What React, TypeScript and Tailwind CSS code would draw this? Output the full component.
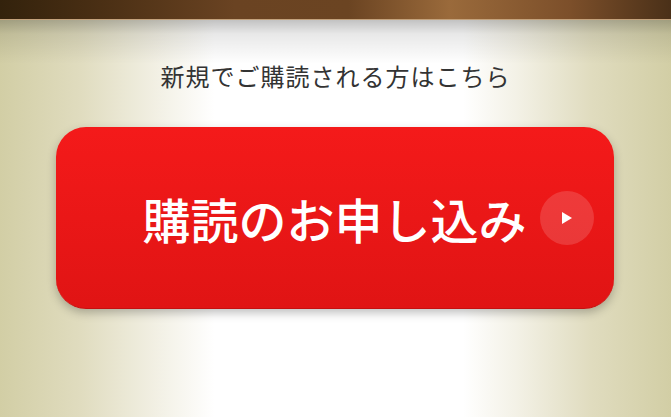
export default function App() {
  return (
    <div className="h-[417px] w-full overflow-hidden bg-[linear-gradient(to_right,#d2cea5_0%,#e0dcbf_12%,#f3f1e6_24%,#ffffff_32%,#ffffff_69%,#f3f1e6_77%,#e0dcbf_88%,#d2cea5_100%)] font-['Noto_Sans_CJK_JP',sans-serif]">
      {/* top bar */}
      <div className="h-[20px] border-b border-[#c4a27c] bg-[linear-gradient(to_right,#33220c_0%,#4a2f14_15%,#6a4322_35%,#6b4422_52%,#9a6a3b_67%,#7c4f2a_85%,#4a3018_100%)]" />

      <main className="flex h-[396px] flex-col items-center bg-[linear-gradient(to_bottom,rgba(0,0,0,0.24)_0px,rgba(0,0,0,0.09)_14px,rgba(0,0,0,0)_44px)] pt-[39px]">
        <p className="text-[24px] leading-[33px] tracking-[1px] text-[#333333]">
          新規でご購読される方はこちら
        </p>

        <button className="relative mt-[35px] flex h-[182px] w-[558px] -translate-x-[1px] items-center justify-center rounded-[30px] border-b border-[#c51010] bg-[linear-gradient(to_bottom,#f41a1a,#e01414)] shadow-[0_4px_10px_rgba(0,0,0,0.25)]">
          <span className="text-[48px] font-medium leading-none text-white">
            購読のお申し込み
          </span>
          <span className="absolute right-[20px] top-1/2 flex h-[54px] w-[54px] -translate-y-1/2 items-center justify-center rounded-full bg-white/15">
            <svg width="12" height="14" viewBox="0 0 12 14">
              <path d="M1 1 L11 7 L1 13 Z" fill="#ffffff" />
            </svg>
          </span>
        </button>
      </main>
    </div>
  );
}
